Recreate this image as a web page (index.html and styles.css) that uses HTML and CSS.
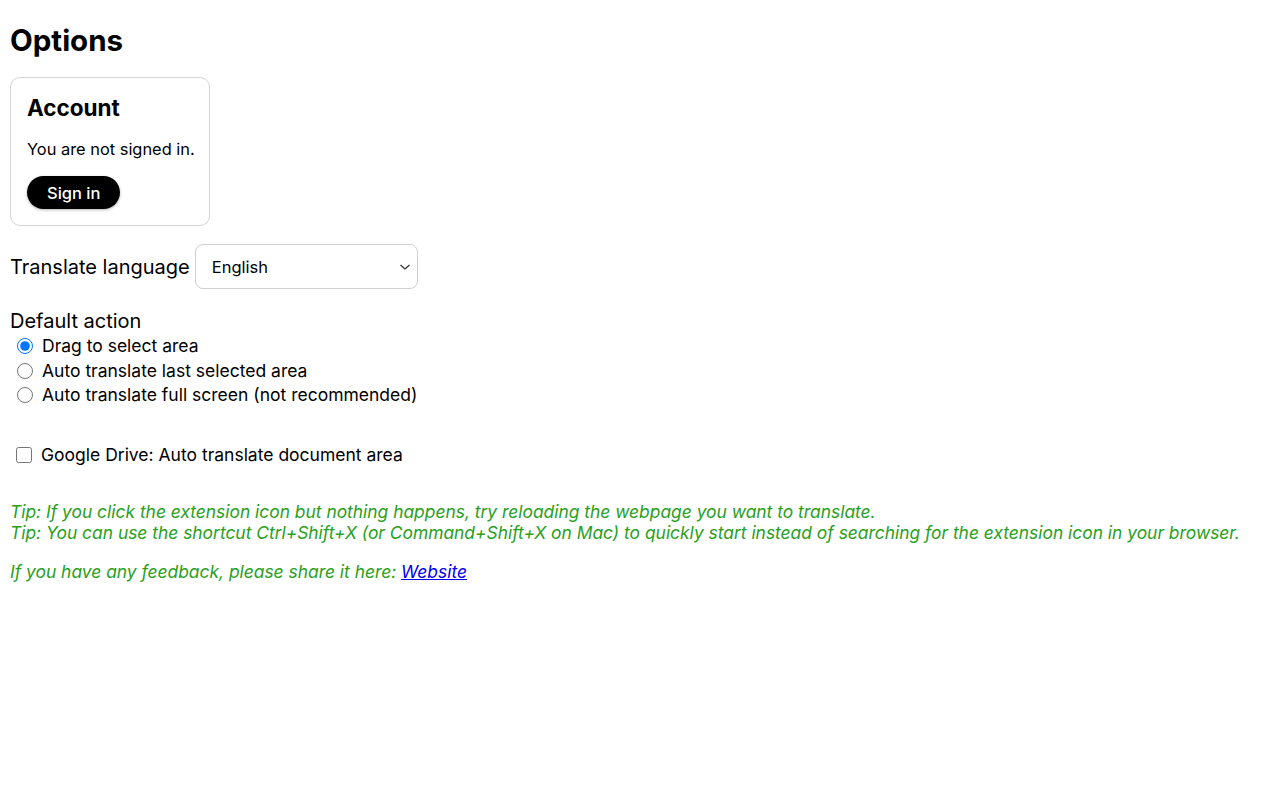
FILE: index.html
```html
<!DOCTYPE html>
<html lang="en">
<head>
    <meta charset="UTF-8">
    <title>Options</title>
    <link rel="stylesheet" href="styles.css">
</head>
<body>
    <h1>Options</h1>

    <!-- account box -->
    <div class="account">
        <h2>Account</h2>
        <p>You are not signed in.</p>
        <button class="sign-in">Sign in</button>
    </div>

    <div class="row">
        <label for="lang">Translate language</label>
        <select id="lang" class="lang-select">
            <option>English</option>
            <option>日本語</option>
            <option>Español</option>
        </select>
    </div>

    <div class="section">
        <div class="section-title">Default action</div>
        <label class="option"><input type="radio" name="action" checked> Drag to select area</label>
        <label class="option"><input type="radio" name="action"> Auto translate last selected area</label>
        <label class="option"><input type="radio" name="action"> Auto translate full screen (not recommended)</label>
    </div>

    <label class="option check"><input type="checkbox"> Google Drive: Auto translate document area</label>

    <p class="tip">
        Tip: If you click the extension icon but nothing happens, try reloading the webpage you want to translate.<br>
        Tip: You can use the shortcut Ctrl+Shift+X (or Command+Shift+X on Mac) to quickly start instead of searching for the extension icon in your browser.
    </p>
    <p class="tip">If you have any feedback, please share it here: <a href="#">Website</a></p>
</body>
</html>
```

FILE: styles.css
```css
body {
    margin: 0;
    padding: 10px;
    font-family: Inter, 'Noto Sans', sans-serif;
    font-size: 16px;
    color: #000;
}

h1 {
    font-size: 29.5px;
    font-weight: 700;
    margin: 12px 0 19px;
}

.account {
    width: 166px;
    border: 1.5px solid #d4d4d4;
    border-radius: 10px;
    padding: 16px;
    margin-bottom: 18px;
}

.account h2 {
    font-size: 22.5px;
    margin: 0 0 18px;
}

.account p {
    margin: 0 0 17px;
    font-size: 16.4px;
    white-space: nowrap;
}

.sign-in {
    background: #000;
    color: #fff;
    border: none;
    border-radius: 17px;
    padding: 0 20px;
    height: 33px;
    font-family: inherit;
    font-size: 16.5px;
    font-weight: 500;
    box-shadow: 0 1px 3px rgba(0,0,0,0.3);
    cursor: pointer;
}

.row {
    display: flex;
    align-items: center;
    gap: 5px;
    font-size: 20px;
}

.lang-select {
    appearance: none;
    width: 223px;
    height: 45px;
    border: 1.5px solid #d0d0d0;
    border-radius: 8px;
    background: #fff url("data:image/svg+xml,%3Csvg xmlns='http://www.w3.org/2000/svg' width='12' height='8' viewBox='0 0 12 8'%3E%3Cpath d='M1.5 2l4.5 4 4.5-4' fill='none' stroke='%23333' stroke-width='1.3'/%3E%3C/svg%3E") no-repeat right 6px center;
    font-family: inherit;
    font-size: 16.5px;
    padding: 0 16px;
    color: #000;
}

.section {
    margin-top: 20px;
}

.section-title {
    font-size: 20px;
    margin-bottom: 1px;
}

.option {
    display: flex;
    align-items: center;
    font-size: 17.5px;
    line-height: 24.5px;
}

.option input {
    margin: 0 9px 0 7px;
    width: 16px;
    height: 16px;
}

.check {
    margin-top: 35px;
}

.check input {
    margin-left: 6px;
}

.tip {
    color: #28a01c;
    font-style: italic;
    font-size: 17.4px;
    line-height: 21px;
    margin: 34px 0 0;
}

.tip + .tip {
    margin-top: 18px;
}

.tip a {
    color: #0000ee;
}
```
